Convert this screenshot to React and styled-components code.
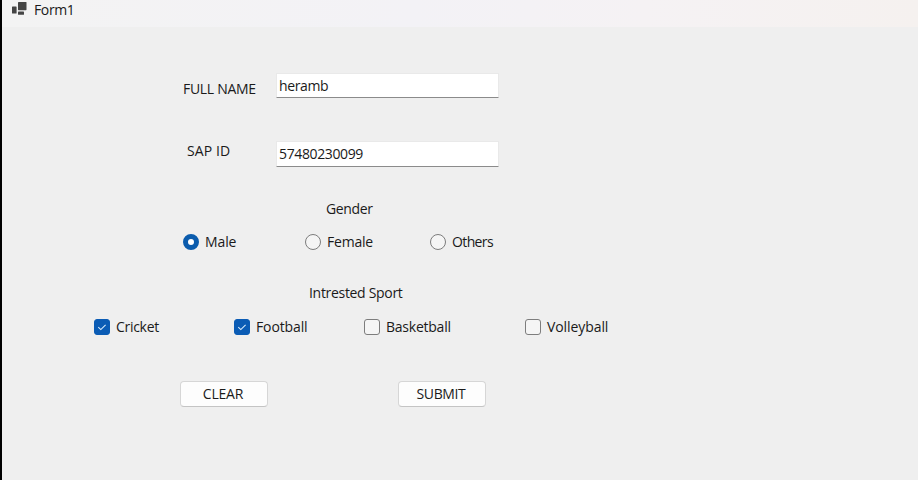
import React, { useState } from 'react';
import styled, { createGlobalStyle } from 'styled-components';

const GlobalStyle = createGlobalStyle`
  * { box-sizing: border-box; }
  body { margin: 0; overflow: hidden; background: #f0f0f0; }
`;

const Window = styled.div`
  width: 918px;
  height: 480px;
  border-left: 2px solid #000;
  background: #efefef;
  color: #1a1a1a;
  font-family: 'Open Sans', 'Noto Sans', sans-serif;
  font-size: 14px;
  line-height: 20px;
  letter-spacing: -0.37px;
  white-space: nowrap;
`;

const TitleBar = styled.header`
  display: flex;
  height: 27px;
  padding-left: 10px;
  gap: 7px;
  background: linear-gradient(90deg, #f3f3f3 0%, #f3f2f6 45%, #f5f2f4 70%, #f5f1ef 100%);
`;

const AppIcon = styled.svg`
  width: 15px;
  height: 17px;
  flex: none;
`;

const Text = styled.span`
  letter-spacing: ${({ $track }) => $track ?? -0.37}px;
`;

const Form = styled.form`
  display: flex;
  flex-direction: column;
  padding-top: 46px;
`;

const Field = styled.label`
  display: grid;
  grid-template-columns: 274px 223px;
  align-items: start;
  height: ${({ $height }) => $height}px;
`;

const FieldLabel = styled(Text)`
  padding-left: ${({ $indent }) => $indent}px;
  padding-top: ${({ $drop }) => $drop}px;
`;

const TextInput = styled.input`
  width: 223px;
  height: ${({ $height }) => $height}px;
  padding: 0 2px 1px;
  border: 1px solid #e9e9e9;
  border-bottom: 1px solid #8b8b8b;
  border-radius: 1px;
  outline: none;
  background: #fff;
  color: inherit;
  font: inherit;
  letter-spacing: -0.37px;
`;

const Heading = styled.div`
  height: 20px;
  padding-left: ${({ $indent }) => $indent}px;
`;

const Options = styled.div`
  display: grid;
  grid-template-columns: ${({ $columns }) => $columns};
  height: 20px;
  margin: ${({ $margin }) => $margin};
`;

const Option = styled.label`
  display: flex;
  align-items: center;
  gap: 6px;
`;

const Choice = styled.input`
  appearance: none;
  flex: none;
  width: 16px;
  height: 16px;
  margin: 0;
  border: 1px solid #7d7d7d;
  border-radius: ${({ type }) => (type === 'radio' ? '50%' : '3px')};
  background: #f5f5f5;

  &[type='radio']:checked {
    border: 5px solid #0b5cad;
    background: #fff;
  }
  &[type='checkbox']:checked {
    border-color: #0b5cb5;
    background: #0b5cb5;
  }
`;

const CheckCell = styled.span`
  display: grid;
  height: 16px;
  > * { grid-area: 1 / 1; }
`;

const Tick = styled.svg`
  width: 16px;
  height: 16px;
  pointer-events: none;
`;

const Actions = styled.div`
  display: flex;
  gap: 130px;
  padding-left: 178px;
`;

const Button = styled.button`
  width: 88px;
  height: 26px;
  padding: 0 2px 0 0;
  border: 1px solid #d6d6d6;
  border-bottom-color: #c4c4c4;
  border-radius: 4px;
  background: #fdfdfd;
  color: inherit;
  font: inherit;
  line-height: 24px;
`;

const genders = [['Male', -0.1], ['Female', -0.2], ['Others', -0.62]];
const sportList = [['Cricket', -0.3], ['Football', -0.12], ['Basketball', -0.24], ['Volleyball', -0.08]];

export default function App() {
  const [name, setName] = useState('heramb');
  const [sapId, setSapId] = useState('57480230099');
  const [gender, setGender] = useState('Male');
  const [sports, setSports] = useState(['Cricket', 'Football']);

  const toggle = (sport) =>
    setSports((all) => (all.includes(sport) ? all.filter((s) => s !== sport) : [...all, sport]));
  const clear = () => {
    setName('');
    setSapId('');
    setGender('');
    setSports([]);
  };

  return (
    <Window>
      <GlobalStyle />
      <TitleBar>
        <AppIcon viewBox="0 0 15 17" fill="#444">
          <rect x="0" y="6.5" width="4.6" height="7" rx="0.6" />
          <rect x="6" y="2" width="8.5" height="8.2" rx="0.6" />
          <rect x="6" y="11.6" width="6" height="3.2" rx="0.6" />
        </AppIcon>
        <Text>Form1</Text>
      </TitleBar>
      <Form onSubmit={(e) => e.preventDefault()}>
        <Field $height={68}>
          <FieldLabel $indent={181} $drop={6} $track={-0.3}>FULL NAME</FieldLabel>
          <TextInput $height={25} value={name} onChange={(e) => setName(e.target.value)} />
        </Field>
        <Field $height={58}>
          <FieldLabel $indent={185} $drop={0} $track={0.1}>SAP ID</FieldLabel>
          <TextInput $height={26} value={sapId} onChange={(e) => setSapId(e.target.value)} />
        </Field>
        <Heading $indent={324}>
          <Text>Gender</Text>
        </Heading>
        <Options $columns="122px 125px 120px" $margin="13px 0 31px 181px">
          {genders.map(([label, track]) => (
            <Option key={label}>
              <Choice type="radio" checked={gender === label} onChange={() => setGender(label)} />
              <Text $track={track}>{label}</Text>
            </Option>
          ))}
        </Options>
        <Heading $indent={307}>
          <Text $track={-0.31}>Intrested Sport</Text>
        </Heading>
        <Options $columns="140px 130px 161px 120px" $margin="14px 0 44px 92px">
          {sportList.map(([label, track]) => (
            <Option key={label}>
              <CheckCell>
                <Choice type="checkbox" checked={sports.includes(label)} onChange={() => toggle(label)} />
                {sports.includes(label) && (
                  <Tick viewBox="0 0 16 16" fill="none" stroke="#d9ecfb" strokeWidth="1.1">
                    <path d="M4.3 8.2 L6.8 10.6 L11.6 5.8" />
                  </Tick>
                )}
              </CheckCell>
              <Text $track={track}>{label}</Text>
            </Option>
          ))}
        </Options>
        <Actions>
          <Button type="button" onClick={clear}>
            <Text $track={-0.2}>CLEAR</Text>
          </Button>
          <Button type="submit">
            <Text>SUBMIT</Text>
          </Button>
        </Actions>
      </Form>
    </Window>
  );
}
